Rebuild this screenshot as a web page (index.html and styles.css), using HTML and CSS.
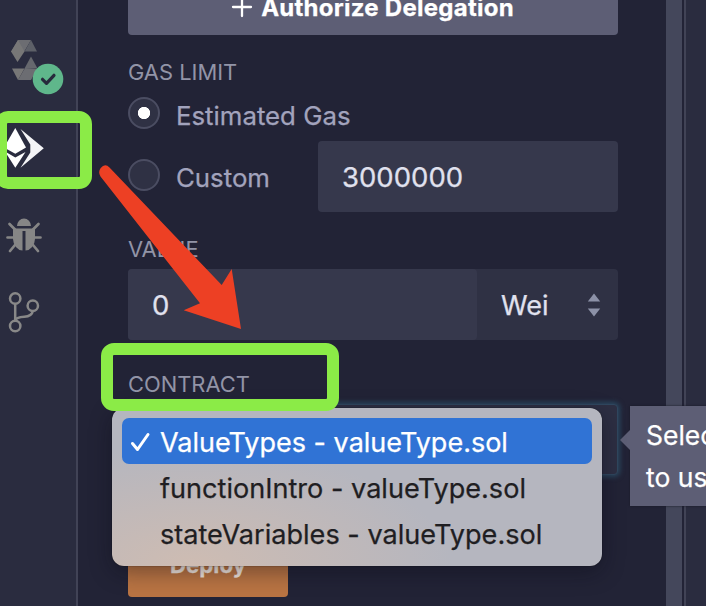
FILE: index.html
```
<!DOCTYPE html>
<html lang="en">
<head>
<meta charset="utf-8">
<title>Deploy &amp; run transactions</title>
<link rel="stylesheet" href="styles.css">
</head>
<body>
<div class="app">
  <nav class="rail">
    <div class="rail-item compiler">
      <svg width="64" height="58" viewBox="0 0 64 58">
        <path fill="#6c6d72" d="M18 2h13l-7 12H11z"/>
        <path fill="#777777" d="M11 13.500 18 2l6.500 11.500L17.500 24z"/>
        <path fill="#5d6068" d="M31 2l6 11.500H24.500z"/>
        <path fill="#6c6d72" d="M37 31 31 42H18l7-12z"/>
        <path fill="#66686e" d="M31 18.500 37.500 30.500H24.500z"/>
        <path fill="#777777" d="M12 30.500h12.500L18 42z"/>
        <circle cx="48" cy="41" r="15.300" fill="#5fb78b"/>
        <path d="m42.500 41.300 4 4 7.500-8" fill="none" stroke="#272a3c" stroke-width="3.200" stroke-linecap="round" stroke-linejoin="round"/>
      </svg>
    </div>
    <div class="rail-item run">
      <svg width="50" height="42" viewBox="0 0 50 42">
        <path fill="#fff" d="M15.300 1 26 20.500 15.300 26.700 4 20.500z"/>
        <path fill="#fff" d="M5 24.500 15.300 30.500 25.500 25 15.300 40.700z"/>
        <path fill="#f4f4f6" d="M20.500 2 43.800 21.300 20.500 40.800 30.300 25.500V17.500z"/>
      </svg>
    </div>
    <div class="rail-item debug">
      <svg width="36" height="38" viewBox="0 0 36 38">
        <path fill="#868686" d="M11 9a7 7.500 0 0 1 14 0zM7 11.500h22V22a10 12 0 0 1-9.500 11.500V14h-3v19.500A10 12 0 0 1 7 22z"/>
        <path d="M3.500 7 9 12.500M32.500 7 27 12.500M1.500 20.500H8M28 20.500h6.500M9 28l-5 6M27 28l5 6" fill="none" stroke="#868686" stroke-width="2.700" stroke-linecap="round"/>
      </svg>
    </div>
    <div class="rail-item git">
      <svg width="34" height="42" viewBox="0 0 34 42" fill="none" stroke="#888888" stroke-width="2.500">
        <circle cx="8.200" cy="7.500" r="5.200"/><circle cx="25.800" cy="14.800" r="5.200"/><circle cx="8.200" cy="35" r="5.200"/>
        <path d="M8.200 12.700v17M25.800 20c-.8 4.500-4 5.500-8.500 5.700-5 .2-8.500.8-9.100 4"/>
      </svg>
    </div>
  </nav>

  <main class="panel">
    <button class="authorize">
      <svg width="20" height="20" viewBox="0 0 20 20"><path d="M10 1v18M1 10h18" stroke="#fff" stroke-width="2.300" stroke-linecap="round"/></svg>
      <span>Authorize Delegation</span>
    </button>

    <div class="label gas-label">GAS LIMIT</div>
    <div class="gas">
      <div class="choices">
        <div class="choice"><i class="radio on"></i><span>Estimated Gas</span></div>
        <div class="choice"><i class="radio"></i><span>Custom</span></div>
      </div>
      <div class="field custom-field">3000000</div>
    </div>

    <div class="label value-label">VALUE</div>
    <div class="value-row">
      <div class="field amount">0</div>
      <div class="unit">
        <span>Wei</span>
        <svg width="12" height="24" viewBox="0 0 12 24" fill="#8c91a7"><path d="M6 .5 12.200 8.500H-.2zM-.2 15.500h12.400L6 23.500z"/></svg>
      </div>
    </div>

    <div class="label contract-label">CONTRACT</div>
    <div class="contract-select">
      <div class="menu">
        <div class="option selected">
          <svg width="20" height="20" viewBox="0 0 20 20"><path d="m2.500 12.500 5 6L18 3.500" fill="none" stroke="#fff" stroke-width="3" stroke-linecap="round" stroke-linejoin="round"/></svg>
          <span>ValueTypes - valueType.sol</span>
        </div>
        <div class="option"><span>functionIntro - valueType.sol</span></div>
        <div class="option"><span>stateVariables - valueType.sol</span></div>
      </div>
      <div class="tooltip">Select<br>to use</div>
    </div>
    <button class="deploy"><span>Deploy</span></button>
  </main>
  <div class="splitter"></div>
  <section class="editor"></section>

  <div class="mark mark-run"></div>
  <div class="mark mark-contract"></div>
  <svg class="arrow" width="150" height="175" viewBox="0 0 150 175"><path fill="#ed4024" d="M9.500 8.500Q5 4 .7 9q-3 4-.2 8.500L100 144.300 83.700 151.300 141 170 131.700 110 121.700 126z"/></svg>
</div>
</body>
</html>
```
FILE: styles.css
```
* { box-sizing: border-box; }
body {
  margin: 0;
  width: 706px;
  height: 606px;
  overflow: hidden;
  background: #222336;
  font-family: Inter, "Liberation Sans", sans-serif;
  -webkit-text-stroke: .25px currentColor;
}
button { border: 0; padding: 0; font: inherit; color: #fff; }
svg { display: block; flex: none; overflow: visible; }
.app { position: relative; display: flex; width: 706px; height: 606px; overflow: hidden; }

.rail {
  width: 78px;
  flex: none;
  background: #2a2c3f;
  border-right: 2px solid #414356;
  display: flex;
  flex-direction: column;
}
.compiler { padding-top: 38px; }
.run { padding-top: 31px; }
.debug { padding: 48px 0 0 6px; }
.git { padding: 36px 0 0 7px; }

.panel { width: 588px; flex: none; padding: 0 48px 0 50px; }
.authorize {
  display: flex;
  gap: 9px;
  justify-content: center;
  align-items: flex-start;
  width: 100%;
  height: 35px;
  border-radius: 0 0 4px 4px;
  background: #5d5e75;
  font-size: 24px;
  line-height: 30px;
  font-weight: 700;
  letter-spacing: .26px;
}
.authorize svg { margin-top: -3px; }
.authorize span { margin-top: -7px; }

.label { height: 28px; font-size: 21.9px; line-height: 28px; color: #9294a7; white-space: nowrap; -webkit-text-stroke-width: 0; }
.gas-label { margin-top: 23px; }
.gas { display: flex; margin-top: 11px; height: 115px; }
.choices { width: 190px; display: flex; flex-direction: column; gap: 30px; }
.choice { display: flex; height: 32px; gap: 16px; font-size: 25.8px; line-height: 38px; color: #a2a3bd; white-space: nowrap; }
.radio { flex: none; width: 32px; height: 32px; border-radius: 50%; background: #2f3144; border: 2px solid #4b4d62; }
.radio.on { background: radial-gradient(circle, #fff 5.800px, #2f3144 6.500px); }
.field { height: 71px; border-radius: 4px; background: #36384c; color: #e0e1ee; font-size: 27.5px; line-height: 72px; padding-left: 24px; }
.custom-field { width: 300px; margin-top: 44px; }
.value-label { margin-top: 23px; }
.value-row { display: flex; margin-top: 6px; background: #2f3144; border-radius: 4px; }
.amount { width: 349px; }
.unit { flex: 1; display: flex; justify-content: space-between; align-items: center; padding: 0 18px 0 24px; color: #e0e1ee; font-size: 27px; }
.unit span { padding-top: 2px; }

.contract-label { margin-top: 30px; }
.contract-select {
  position: relative;
  height: 71px;
  margin-top: 6px;
  background: #2d2f43;
  border: 1px solid #30475f;
  border-radius: 4px;
  box-shadow: 0 0 5px 2px #2b4860;
}
.menu {
  position: absolute;
  z-index: 1;
  left: -17px;
  top: 3px;
  width: 490px;
  height: 158px;
  padding: 10px;
  border-radius: 12px;
  background: radial-gradient(ellipse 260px 120px at 80px 158px, #cebcb2, transparent), #b5b6bf;
  box-shadow: 0 6px 22px rgba(10, 10, 20, .4), 0 0 1px #000;
}
.option { display: flex; align-items: center; height: 46px; padding-left: 38px; color: #1f1e22; font-size: 27.1px; white-space: nowrap; }
.option span { padding-top: 3px; }
.option.selected { color: #fff; background: #3073d5; border-radius: 7px; padding-left: 8px; gap: 10px; width: 470px; font-size: 27px; }
.tooltip {
  position: absolute;
  left: 501px;
  top: 1px;
  width: 200px;
  height: 100px;
  padding: 8px 0 0 16px;
  background: #5d5e75;
  color: #fff;
  font-size: 26.5px;
  line-height: 42px;
  white-space: nowrap;
  box-shadow: 0 0 2px #181926;
}
.tooltip::before {
  content: "";
  position: absolute;
  left: -10px;
  top: 24px;
  border: 10px solid transparent;
  border-left: 0;
  border-right-color: #5d5e75;
}
.deploy { display: block; width: 160px; height: 71px; margin-top: 51px; border-radius: 4px; background: #b97443; color: #f1e6df; font-size: 22.3px; line-height: 78px; font-weight: 700; }

.splitter { width: 16px; flex: none; background: #44475b; }
.editor { flex: 1; margin-left: 2px; border-left: 2px solid #414356; background: #2a2c3f; }

.mark { position: absolute; z-index: 2; border: 12px solid #8beb47; border-radius: 13px; }
.mark-run { left: -5px; top: 111px; width: 97px; height: 78px; }
.mark-contract { left: 101px; top: 343px; width: 238px; height: 68px; }
.arrow { position: absolute; z-index: 3; left: 100px; top: 159px; }
```
